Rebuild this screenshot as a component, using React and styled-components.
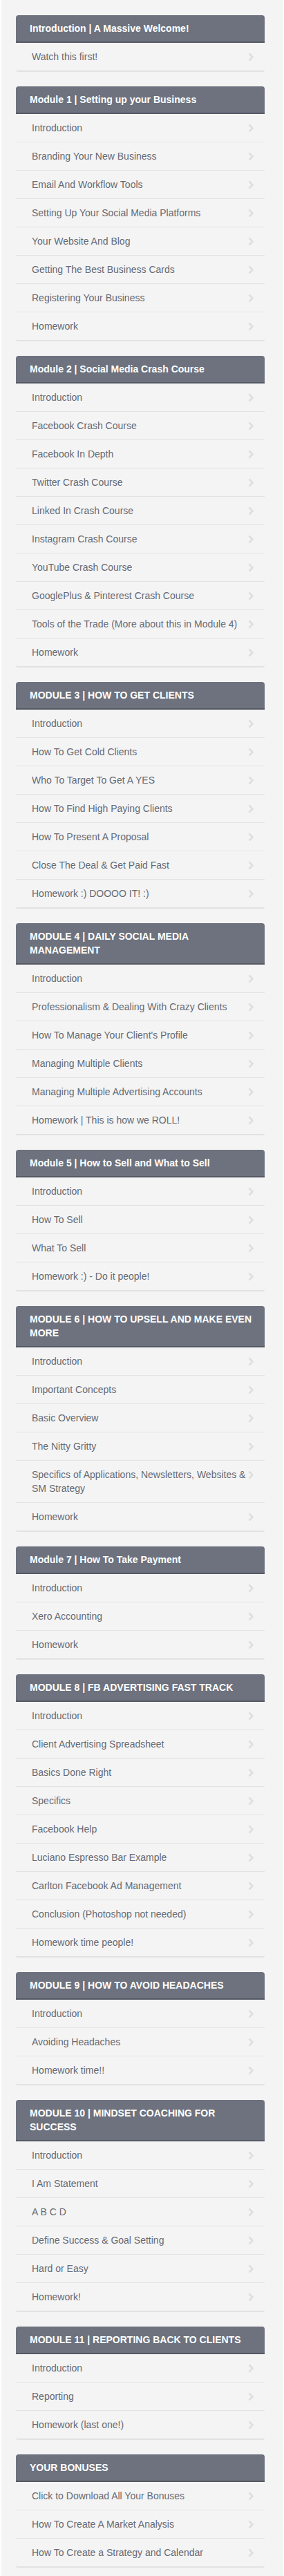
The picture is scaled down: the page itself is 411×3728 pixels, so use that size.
import React from "react"
import styled, { createGlobalStyle } from "styled-components"

const GlobalStyle = createGlobalStyle`
    html, body {
        margin: 0;
        padding: 0;
        background: #ffffff;
    }
    body {
        font-family: "Liberation Sans", Arial, Helvetica, sans-serif;
    }
`

const Page = styled.div`
    margin: 0 1px 0 2px;
    padding: 22px 27px 18px 21px;
    background-color: #f4f4f4;
    display: flex;
    flex-direction: column;
    gap: 21px;
`

const Card = styled.section`
    display: flex;
    flex-direction: column;
    border-radius: 4px 4px 3px 3px;
    overflow: hidden;
    border-bottom: 2px solid #e2e2e2;
`

const Header = styled.h2`
    margin: 0;
    padding: 9px 12px 9px 20px;
    background-color: #6d727e;
    border-bottom: 2px solid #555963;
    color: #ffffff;
    font-size: 14px;
    font-weight: bold;
    line-height: 20px;
`

const List = styled.ul`
    margin: 0;
    padding: 0;
    list-style: none;
`

const Row = styled.li`
    position: relative;
    padding: 10px 26px 10px 23px;
    border-bottom: ${(p) => (p.$last ? "none" : "1px solid #e3e3e3")};
    color: #656a75;
    font-size: 14px;
    line-height: 20px;
    cursor: pointer;
`

const Arrow = styled.svg`
    position: absolute;
    right: 16px;
    top: 14px;
    width: 8px;
    height: 13px;
`

const Chevron = () => (
    <Arrow viewBox="0 0 8 13">
        <polyline points="1.5,1.5 6.5,6.5 1.5,11.5" fill="none" stroke="#dedede" strokeWidth="2.6" />
    </Arrow>
)

const modules = [
    { title: "Introduction | A Massive Welcome!", lessons: ["Watch this first!"] },
    {
        title: "Module 1 | Setting up your Business",
        lessons: [
            "Introduction",
            "Branding Your New Business",
            "Email And Workflow Tools",
            "Setting Up Your Social Media Platforms",
            "Your Website And Blog",
            "Getting The Best Business Cards",
            "Registering Your Business",
            "Homework",
        ],
    },
    {
        title: "Module 2 | Social Media Crash Course",
        lessons: [
            "Introduction",
            "Facebook Crash Course",
            "Facebook In Depth",
            "Twitter Crash Course",
            "Linked In Crash Course",
            "Instagram Crash Course",
            "YouTube Crash Course",
            "GooglePlus & Pinterest Crash Course",
            "Tools of the Trade (More about this in Module 4)",
            "Homework",
        ],
    },
    {
        title: "MODULE 3 | HOW TO GET CLIENTS",
        lessons: [
            "Introduction",
            "How To Get Cold Clients",
            "Who To Target To Get A YES",
            "How To Find High Paying Clients",
            "How To Present A Proposal",
            "Close The Deal & Get Paid Fast",
            "Homework :) DOOOO IT! :)",
        ],
    },
    {
        title: "MODULE 4 | DAILY SOCIAL MEDIA MANAGEMENT",
        lessons: [
            "Introduction",
            "Professionalism & Dealing With Crazy Clients",
            "How To Manage Your Client's Profile",
            "Managing Multiple Clients",
            "Managing Multiple Advertising Accounts",
            "Homework | This is how we ROLL!",
        ],
    },
    {
        title: "Module 5 | How to Sell and What to Sell",
        lessons: ["Introduction", "How To Sell", "What To Sell", "Homework :) - Do it people!"],
    },
    {
        title: "MODULE 6 | HOW TO UPSELL AND MAKE EVEN MORE",
        lessons: [
            "Introduction",
            "Important Concepts",
            "Basic Overview",
            "The Nitty Gritty",
            "Specifics of Applications, Newsletters, Websites & SM Strategy",
            "Homework",
        ],
    },
    {
        title: "Module 7 | How To Take Payment",
        lessons: ["Introduction", "Xero Accounting", "Homework"],
    },
    {
        title: "MODULE 8 | FB ADVERTISING FAST TRACK",
        lessons: [
            "Introduction",
            "Client Advertising Spreadsheet",
            "Basics Done Right",
            "Specifics",
            "Facebook Help",
            "Luciano Espresso Bar Example",
            "Carlton Facebook Ad Management",
            "Conclusion (Photoshop not needed)",
            "Homework time people!",
        ],
    },
    {
        title: "MODULE 9 | HOW TO AVOID HEADACHES",
        lessons: ["Introduction", "Avoiding Headaches", "Homework time!!"],
    },
    {
        title: "MODULE 10 | MINDSET COACHING FOR SUCCESS",
        lessons: [
            "Introduction",
            "I Am Statement",
            "A B C D",
            "Define Success & Goal Setting",
            "Hard or Easy",
            "Homework!",
        ],
    },
    {
        title: "MODULE 11 | REPORTING BACK TO CLIENTS",
        lessons: ["Introduction", "Reporting", "Homework (last one!)"],
    },
    {
        title: "YOUR BONUSES",
        lessons: [
            "Click to Download All Your Bonuses",
            "How To Create A Market Analysis",
            "How To Create a Strategy and Calendar",
        ],
    },
]

const ModuleCard = ({ title, lessons }) => (
    <Card>
        <Header>{title}</Header>
        <List>
            {lessons.map((lesson, i) => (
                <Row key={i} $last={i === lessons.length - 1}>
                    {lesson}
                    <Chevron />
                </Row>
            ))}
        </List>
    </Card>
)

const App = () => {
    return (
        <>
            <GlobalStyle />
            <Page>
                {modules.map((m) => (
                    <ModuleCard key={m.title} title={m.title} lessons={m.lessons} />
                ))}
            </Page>
        </>
    )
}

export default App
